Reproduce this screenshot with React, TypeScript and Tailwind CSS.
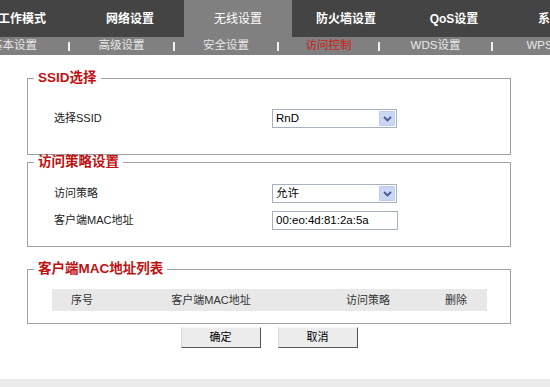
import React from "react";

const FONT = { fontFamily: '"Liberation Sans", "Noto Sans CJK SC", sans-serif' };

function Chevron() {
  return (
    <svg width="9" height="6" viewBox="0 0 9 6">
      <path d="M1 1 L4.5 4.5 L8 1" fill="none" stroke="#4a5d8a" strokeWidth="1.8" />
    </svg>
  );
}

function FakeSelect({ value }: { value: string }) {
  return (
    <div className="w-[125px] h-[19px] border border-[#a7b0bd] bg-white flex items-center justify-between pl-[3px] pr-px">
      <span className="text-[11.5px] text-black leading-none">{value}</span>
      <div className="w-[16px] h-[15px] rounded-[1px] border border-[#bccdf0] bg-[#c9d6f4] flex items-center justify-center">
        <Chevron />
      </div>
    </div>
  );
}

function Legend({ children }: { children: React.ReactNode }) {
  return (
    <legend className="ml-[6px] px-[4px] text-[13.5px] leading-[16px] font-bold text-[#c01010]">
      {children}
    </legend>
  );
}

export default function App() {
  const tabs = [
    { t: "工作模式", a: false },
    { t: "网络设置", a: false },
    { t: "无线设置", a: true },
    { t: "防火墙设置", a: false },
    { t: "QoS设置", a: false },
    { t: "系统管理", a: false },
  ];
  const subs = [
    { t: "基本设置", w: "w-[108px]", red: false },
    { t: "高级设置", w: "w-[103px]", red: false },
    { t: "安全设置", w: "w-[102px]", red: false },
    { t: "访问控制", w: "w-[99px]", red: true },
    { t: "WDS设置", w: "w-[111px]", red: false },
    { t: "WPS设置", w: "w-[116px]", red: false },
  ];
  return (
    <div className="w-[550px] h-[387px] overflow-hidden bg-white flex flex-col" style={FONT}>
      <div className="h-[37px] bg-[#444444] flex shrink-0">
        <div className="flex ml-[-32px]">
          {tabs.map((x) => (
            <div
              key={x.t}
              className={
                "w-[108px] shrink-0 flex items-center justify-center text-[12px] text-white " +
                (x.a ? "bg-[#808080] font-normal" : "font-bold")
              }
            >
              {x.t}
            </div>
          ))}
        </div>
      </div>
      <div className="h-[18px] bg-[#808080] flex items-center shrink-0">
        <div className="flex items-center ml-[-40px]">
          {subs.map((s, i) => (
            <React.Fragment key={s.t}>
              {i > 0 && <div className="w-[2px] h-[9px] bg-[#f0f0f0] shrink-0" />}
              <div
                className={
                  s.w +
                  " shrink-0 text-center text-[11.5px] leading-none " +
                  (s.red ? "text-[#d01818]" : "text-[#e8e8e8]")
                }
              >
                {s.t}
              </div>
            </React.Fragment>
          ))}
        </div>
      </div>

      <div className="ml-[27px] w-[484px] mt-[15px]">
        <fieldset className="border border-[#a0a0a0] pt-[23px] pb-[26px]">
          <Legend>SSID选择</Legend>
          <div className="flex items-center h-[19px] pl-[26px]">
            <div className="w-[218px] text-[11px] text-[#222]">选择SSID</div>
            <FakeSelect value="RnD" />
          </div>
        </fieldset>

        <fieldset className="border border-[#a0a0a0] -mt-px pt-[14px] pb-[16px]">
          <Legend>访问策略设置</Legend>
          <div className="flex flex-col gap-[8px] pl-[26px]">
            <div className="flex items-center h-[19px]">
              <div className="w-[218px] text-[11px] text-[#222]">访问策略</div>
              <FakeSelect value="允许" />
            </div>
            <div className="flex items-center h-[19px]">
              <div className="w-[218px] text-[11px] text-[#222]">客户端MAC地址</div>
              <div className="w-[126px] h-[19px] border border-[#a7b0bd] bg-white flex items-center pl-[3px]">
                <span className="text-[11.5px] text-black leading-none">00:eo:4d:81:2a:5a</span>
              </div>
            </div>
          </div>
        </fieldset>

        <fieldset className="border border-[#a0a0a0] mt-[14px] pt-[12px] pb-[12px]">
          <Legend>客户端MAC地址列表</Legend>
          <div className="ml-[24px] mr-[23px] h-[22px] bg-[#e8e8e8] flex items-center text-[11px] text-[#333]">
            <div className="w-[60px] text-center">序号</div>
            <div className="w-[198px] text-center">客户端MAC地址</div>
            <div className="w-[116px] text-center">访问策略</div>
            <div className="w-[60px] text-center">删除</div>
          </div>
        </fieldset>

        <div className="flex justify-center gap-[17px] mt-[3px]">
          <button className="w-[80px] h-[21px] bg-[#ececec] border border-t-[#f8f8f8] border-l-[#d8d8d8] border-r-[#555] border-b-[#555] text-[11px] text-black leading-none">
            确定
          </button>
          <button className="w-[80px] h-[21px] bg-[#ececec] border border-t-[#f8f8f8] border-l-[#d8d8d8] border-r-[#555] border-b-[#555] text-[11px] text-black leading-none">
            取消
          </button>
        </div>
      </div>

      <div className="flex-1" />
      <div className="h-[8px] bg-[#ebebeb] shrink-0" />
    </div>
  );
}
